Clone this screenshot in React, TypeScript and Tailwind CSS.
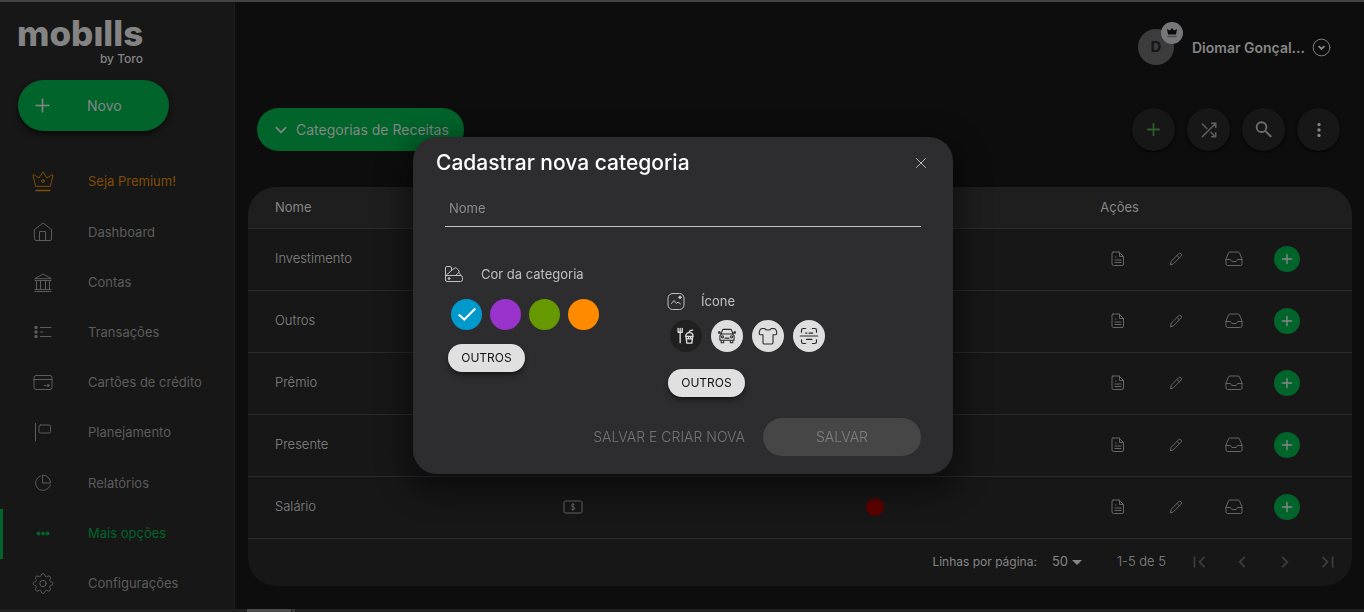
import React from "react";

type IconProps = { className?: string; children: React.ReactNode; box?: string; w?: number };

function Icon({ className = "", children, box = "0 0 24 24", w = 1 }: IconProps) {
  return (
    <svg
      viewBox={box}
      fill="none"
      stroke="currentColor"
      strokeWidth={w}
      strokeLinecap="round"
      strokeLinejoin="round"
      aria-hidden="true"
      className={"shrink-0 " + className}
    >
      {children}
    </svg>
  );
}

const menu = [
  {
    label: "Seja Premium!",
    tone: "text-[#804d05]",
    icon: (
      <>
        <path d="M4.500 16 2 5h1.500L8 8 12 2l4 6 4.500-3H22l-2.500 11Z" />
        <circle cx="12" cy="11" r="1.400" />
        <path d="M5 20.500h14" strokeWidth="1.400" />
      </>
    ),
  },
  {
    label: "Dashboard",
    tone: "text-[#5c5c5c]",
    icon: (
      <>
        <path d="M3.500 9.500 12 3l8.500 6.500V19a1.500 1.500 0 0 1-1.500 1.500H5A1.500 1.500 0 0 1 3.500 19Z" />
        <path d="M8.500 20.500v-9h6v9" />
      </>
    ),
  },
  {
    label: "Contas",
    tone: "text-[#5c5c5c]",
    icon: (
      <path d="M4 7.500 12 3l8 4.500ZM4 9.500h16M4 18.500h16M4 20.500h16M5.500 10v8.500M9.500 10v8.500M14.500 10v8.500M18.500 10v8.500" />
    ),
  },
  {
    label: "Transações",
    tone: "text-[#5c5c5c]",
    icon: (
      <>
        <path d="M9.500 6.500h10.500M9.500 11h2.500M9.500 15.500h10.500" />
        <g fill="currentColor" stroke="none">
          <circle cx="5" cy="6.500" r="1.700" />
          <circle cx="5" cy="11" r="1.700" />
          <circle cx="5" cy="15.500" r="1.700" />
        </g>
      </>
    ),
  },
  {
    label: "Cartões de crédito",
    tone: "text-[#5c5c5c]",
    icon: (
      <>
        <rect x="3" y="4.500" width="18" height="14" rx="2" />
        <path d="M3 8.500h18M13.500 14.500h1.500" />
        <circle cx="17.200" cy="14.500" r="1" fill="currentColor" />
      </>
    ),
  },
  {
    label: "Planejamento",
    tone: "text-[#5c5c5c]",
    icon: (
      <>
        <path d="M4.500 2.500V20" />
        <rect x="8" y="4" width="11.500" height="8" rx="1.500" />
      </>
    ),
  },
  {
    label: "Relatórios",
    tone: "text-[#5c5c5c]",
    icon: (
      <>
        <path d="M9.500 4.900A7.500 7.500 0 1 0 19.300 14" />
        <path d="M12 4a8 8 0 0 1 7.500 8H12Z" />
      </>
    ),
  },
  {
    label: "Mais opções",
    tone: "text-[#00642b]",
    active: true,
    icon: (
      <g fill="currentColor" stroke="none">
        <circle cx="7.500" cy="11.500" r="1.900" />
        <circle cx="12" cy="11.500" r="1.900" />
        <circle cx="16.500" cy="11.500" r="1.900" />
      </g>
    ),
  },
  {
    label: "Configurações",
    tone: "text-[#5c5c5c]",
    icon: (
      <>
        <path d="M10.300 2.800a1.800 1.800 0 0 1 3.400 0l.4 1.200c.2.700 1 1 1.700.7l1.200-.6a1.800 1.800 0 0 1 2.400 2.400l-.6 1.200c-.3.700 0 1.500.7 1.700l1.200.4a1.800 1.800 0 0 1 0 3.400l-1.200.4c-.7.200-1 1-.7 1.700l.6 1.200a1.800 1.800 0 0 1-2.400 2.400l-1.200-.6c-.7-.3-1.500 0-1.700.7l-.4 1.200a1.800 1.800 0 0 1-3.400 0l-.4-1.200c-.2-.7-1-1-1.700-.7l-1.200.6a1.800 1.800 0 0 1-2.400-2.400l.6-1.200c.3-.7 0-1.500-.7-1.700l-1.200-.4a1.800 1.800 0 0 1 0-3.400l1.200-.4c.7-.2 1-1 .7-1.700l-.6-1.200A1.800 1.800 0 0 1 7 4.100l1.200.6c.7.3 1.500 0 1.700-.7Z" />
        <circle cx="12" cy="11.500" r="3.200" />
      </>
    ),
  },
];

const rows = ["Investimento", "Outros", "Prêmio", "Presente", "Salário"];

function Sidebar() {
  return (
    <aside className="flex w-[235px] shrink-0 flex-col border-r border-[#1f1f1f] bg-[#171717]">
      <a href="#inicio" className="ml-[17px] mt-[13px] flex w-[126px] flex-col gap-[2px] text-[#848484]">
        <span className="text-[35px] font-extrabold leading-9">mobılls</span>
        <span className="text-right text-[12px] font-medium leading-3">by Toro</span>
      </a>
      <button
        type="button"
        className="mb-[26px] ml-[18px] mt-[15px] flex h-[51px] w-[151px] shrink-0 items-center rounded-full bg-[#00642b] pl-[15px] text-[14px] text-[#868686] shadow-md shadow-black/50"
      >
        <Icon className="size-[19px]" w={2}>
          <path d="M12 4v16M4 12h16" />
        </Icon>
        <span className="ml-[35px]">Novo</span>
      </button>
      <nav className="flex flex-1 flex-col">
        {menu.map((item) => (
          <a
            key={item.label}
            href="#menu"
            aria-current={item.active ? "page" : undefined}
            className={
              "flex min-h-12 flex-1 items-center border-l-[3px] pl-7 text-[13px] " +
              item.tone +
              (item.active ? " border-[#00642b]" : " border-transparent")
            }
          >
            <Icon className="size-6">{item.icon}</Icon>
            <span className="ml-[33px]">{item.label}</span>
          </a>
        ))}
      </nav>
    </aside>
  );
}

function RoundButton({ label, tone, children }: { label: string; tone: string; children: React.ReactNode }) {
  return (
    <button
      type="button"
      aria-label={label}
      className={"flex size-[43px] items-center justify-center rounded-full bg-[#171717] shadow-sm shadow-black/60 " + tone}
    >
      {children}
    </button>
  );
}

function Header() {
  return (
    <header className="flex items-center justify-end pr-[21px] pt-[27px]">
      <div className="relative flex size-9 items-center justify-center rounded-full bg-[#3c3c3c] text-[15px] font-bold text-[#161616]">
        D
        <span className="absolute -right-[9px] -top-[7px] flex size-[22px] items-center justify-center rounded-full bg-[#77777a]">
          <svg viewBox="0 0 12 12" className="size-3" aria-hidden="true">
            <path d="M2 7.500 1 2l3 1.500L6 1l2 2.500L11 2l-1 5.500Z" fill="#0a0a0a" />
            <path d="M1.500 9.500h9" stroke="#4c4c4e" strokeWidth="1.400" />
          </svg>
        </span>
      </div>
      <button type="button" className="ml-[18px] flex items-center gap-[7px] text-[#868686]">
        <span className="text-[14px] font-semibold">Diomar Gonçal...</span>
        <Icon className="size-[19px]" box="0 0 20 20">
          <circle cx="10" cy="10" r="8.800" />
          <path d="m7.500 9 2.500 2.500L12.500 9" strokeWidth="2" />
        </Icon>
      </button>
    </header>
  );
}

function Toolbar() {
  return (
    <div className="mt-[43px] flex items-center justify-between pl-[9px] pr-3">
      <button
        type="button"
        className="flex h-[43px] w-[207px] items-center gap-[7px] rounded-full bg-[#00642b] pl-4 text-[14px] text-[#868686]"
      >
        <Icon className="size-4" w={2.500}>
          <path d="m5 8.500 7 7 7-7" />
        </Icon>
        <span className="whitespace-nowrap">Categorias de Receitas</span>
      </button>
      <div className="flex gap-3">
        <RoundButton label="Adicionar" tone="text-[#2c5c2f]">
          <Icon className="size-[17px]" w={2.500}>
            <path d="M12 4v16M4 12h16" />
          </Icon>
        </RoundButton>
        <RoundButton label="Alternar" tone="text-[#606060]">
          <Icon className="size-[18px]" w={2}>
            <path d="m3 21 18-18M15.500 3H21v5.500M3 4l6 6M14.500 15l6 6M21 15.500V21h-5.500" />
          </Icon>
        </RoundButton>
        <RoundButton label="Buscar" tone="text-[#6e6e6e]">
          <Icon className="size-[19px]" w={2.400}>
            <circle cx="9.500" cy="9" r="6.200" />
            <path d="m14.500 14 6.500 6.500" />
          </Icon>
        </RoundButton>
        <RoundButton label="Mais" tone="text-[#868686]">
          <svg viewBox="0 0 24 24" fill="currentColor" className="size-5" aria-hidden="true">
            <circle cx="12" cy="5.500" r="2" />
            <circle cx="12" cy="12" r="2" />
            <circle cx="12" cy="18.500" r="2" />
          </svg>
        </RoundButton>
      </div>
    </div>
  );
}

function RowActions({ name }: { name: string }) {
  const cell = "flex h-8 w-9 items-center justify-center text-[#666666]";
  return (
    <div className="flex items-center gap-[22px]">
      <button type="button" aria-label={"Detalhes de " + name} className={cell}>
        <Icon className="size-4" box="0 0 16 16">
          <path d="M3 1h6l4.500 4.500V13a1.500 1.500 0 0 1-1.500 1.500H3.500A1.500 1.500 0 0 1 2 13V2A1 1 0 0 1 3 1ZM9.500 1v4.500h4M5.500 6h.5M5 9h6M5 11.500h6" />
        </Icon>
      </button>
      <button type="button" aria-label={"Editar " + name} className={cell}>
        <Icon className="size-4" box="0 0 16 16">
          <path d="m2.500 13.500.8-3.300 7.200-7.400a1.700 1.700 0 0 1 2.500 2.400L5.600 12.600ZM9 4.500l2.400 2.400" />
        </Icon>
      </button>
      <button type="button" aria-label={"Arquivar " + name} className={cell}>
        <Icon className="size-[18px]" box="0 0 18 18">
          <path d="M1 9 3.500 3A1.500 1.500 0 0 1 5 2h8a1.500 1.500 0 0 1 1.500 1L17 9v5a1.500 1.500 0 0 1-1.500 1.500h-13A1.500 1.500 0 0 1 1 14ZM1 9.500h4.500c.5 0 .7 2 1.500 2h4c.8 0 1-2 1.500-2H17" />
        </Icon>
      </button>
      <button
        type="button"
        aria-label={"Adicionar em " + name}
        className="flex size-[26px] items-center justify-center rounded-full bg-[#00642b] text-[#868686]"
      >
        <Icon className="size-[14px]" w={2.400}>
          <path d="M12 4v16M4 12h16" />
        </Icon>
      </button>
    </div>
  );
}

function PageButton({ label, d }: { label: string; d: string }) {
  return (
    <button type="button" disabled aria-label={label} className="flex h-8 w-[43px] items-center justify-center text-[#3c3c3c]">
      <svg viewBox="0 0 24 24" fill="none" stroke="currentColor" strokeWidth="2" className="size-[22px]" aria-hidden="true">
        <path d={d} />
      </svg>
    </button>
  );
}

function CategoryTable() {
  return (
    <section className="mt-9 overflow-hidden rounded-[28px] bg-[#171717] text-[#868686]">
      <table className="w-full table-fixed border-collapse text-left text-[13px]">
        <colgroup>
          <col className="w-[28.5%]" />
          <col className="w-[27.5%]" />
          <col className="w-[21.2%]" />
          <col />
        </colgroup>
        <thead>
          <tr className="h-[41px] border-b border-[#2a2a2a] bg-[#1e1e1e]">
            <th className="pl-[27px] font-normal">Nome</th>
            <th className="font-normal">Ícone</th>
            <th className="font-normal">Cor</th>
            <th className="font-normal">Ações</th>
          </tr>
        </thead>
        <tbody className="font-light">
          {rows.map((name) => (
            <tr key={name} className="h-[62px] border-b border-[#2a2a2a]">
              <td className="pl-[27px]">{name}</td>
              <td>
                <svg viewBox="0 0 20 14" className="h-[14px] w-5 text-[#666666]" fill="none" stroke="currentColor" aria-hidden="true">
                  <rect x="1" y="1" width="18" height="12" rx="1.500" />
                  <path d="M11.800 5.200c-.3-.7-1-1-1.800-1-1 0-1.700.5-1.700 1.300 0 1.800 3.500.9 3.500 2.800 0 .9-.8 1.400-1.800 1.400-.9 0-1.600-.4-1.900-1.100M10 3v8" />
                </svg>
              </td>
              <td>
                <span className="block size-[18px] rounded-full bg-[#5e0000]" />
              </td>
              <td>
                <RowActions name={name} />
              </td>
            </tr>
          ))}
        </tbody>
      </table>
      <footer className="flex h-[47px] items-center justify-end pr-[3px] text-[12px]">
        <label htmlFor="linhas">Linhas por página:</label>
        <span className="relative ml-[15px] mr-[35px] flex items-center">
          <select id="linhas" defaultValue="50" className="w-[30px] appearance-none bg-transparent text-[13px] outline-none">
            <option>50</option>
          </select>
          <svg viewBox="0 0 10 5" fill="currentColor" className="pointer-events-none absolute right-0 h-[5px] w-[10px]" aria-hidden="true">
            <path d="M0 0h10L5 5Z" />
          </svg>
        </span>
        <span className="mr-[11px] text-[13px] font-light">1-5 de 5</span>
        <PageButton label="Primeira página" d="M18 6.500 12.500 12l5.500 5.500M7 6v12" />
        <PageButton label="Página anterior" d="M15 6.500 9.500 12l5.500 5.500" />
        <PageButton label="Próxima página" d="m9 6.500 5.500 5.500L9 17.500" />
        <PageButton label="Última página" d="m6 6.500 5.500 5.500L6 17.500M17 6v12" />
      </footer>
    </section>
  );
}

const colors = [
  { name: "Azul", bg: "bg-[#0099cc]" },
  { name: "Roxo", bg: "bg-[#9933cc]" },
  { name: "Verde", bg: "bg-[#669900]" },
  { name: "Laranja", bg: "bg-[#ff8a00]" },
];

const glyphs = [
  {
    name: "Alimentação",
    art: (
      <>
        <path d="M2.500 3v4.500h5V3M5 3v17" strokeWidth="1.600" />
        <path d="M12 12.500h8L19 20.500h-6ZM11.500 12.500c.5-3 2-4.500 4.500-4.500s4.500 1.500 4.500 4.500M15.500 8l1.500-2.500 3-.5M12.500 15.500h7M15 12.500v3M17.500 12.500v3" strokeWidth="1.600" />
      </>
    ),
  },
  {
    name: "Carro",
    art: (
      <>
        <path d="m5 9.500 1.500-4.500A1.500 1.500 0 0 1 8 4h8a1.500 1.500 0 0 1 1.500 1L19 9.500M3.500 17v-5.500l2-2h13l2 2V17ZM5 17v3h3v-3M16 17v3h3v-3M9.500 14.500h5M3.500 7H2v1.500h3M20.500 7H22v1.500h-3" />
        <circle cx="6.500" cy="13" r="1.300" />
        <circle cx="17.500" cy="13" r="1.300" />
      </>
    ),
  },
  {
    name: "Vestuário",
    art: (
      <path d="M8 3c1 2.500 7 2.500 8 0h3c2.500.5 3.500 2.500 3.500 6 0 1-.5 1.500-1.500 1.500h-3v9.500a1.500 1.500 0 0 1-1.500 1.500h-9A1.500 1.500 0 0 1 6 20v-9.500H3c-1 0-1.500-.5-1.500-1.500 0-3.500 1-5.500 3.500-6Z" />
    ),
  },
  {
    name: "Código",
    art: (
      <path d="M3 7.500V5a2 2 0 0 1 2-2h3M16 3h3a2 2 0 0 1 2 2v2.500M21 16.500V19a2 2 0 0 1-2 2h-3M8 21H5a2 2 0 0 1-2-2v-2.500M1.500 12h21M8 8.500h1.500M12 8.500h4.500M9 16h6.500" strokeWidth="1.400" />
    ),
  },
];

function OthersButton({ label }: { label: string }) {
  return (
    <button
      type="button"
      aria-label={label}
      className="flex h-7 w-[77px] items-center justify-center rounded-full bg-[#e0e0e0] text-[12px] text-[#111111] shadow-md shadow-black/40"
    >
      OUTROS
    </button>
  );
}

function CategoryDialog() {
  return (
    <div className="fixed inset-0 flex items-center justify-center pb-0.5 pl-0.5">
      <div
        role="dialog"
        aria-modal="true"
        aria-labelledby="titulo"
        className="w-[540px] max-w-full rounded-[24px] bg-[#2d2d2f] pb-[18px] shadow-[0_11px_30px_8px_rgba(0,0,0,0.45)]"
      >
        <div className="flex items-center justify-between pl-[23px] pr-[25px] pt-3">
          <h2 id="titulo" className="text-[21px] font-medium leading-7 text-white">
            Cadastrar nova categoria
          </h2>
          <button type="button" aria-label="Fechar" className="flex size-[14px] items-center justify-center text-[#b4b4b5]">
            <Icon className="size-[14px]" box="0 0 14 14">
              <path d="m2.500 2.500 9 9M11.500 2.500l-9 9" />
            </Icon>
          </button>
        </div>
        <form className="px-8" onSubmit={(e) => e.preventDefault()}>
          <input
            type="text"
            aria-label="Nome"
            placeholder="Nome"
            className="mt-[14px] block h-9 w-full border-b border-[#c4c4c4] bg-transparent px-1 text-[13px] text-white outline-none placeholder:text-[#8b8b8d]"
          />
          <div className="mt-9 flex">
            <fieldset className="w-[222px]">
              <legend className="flex h-6 items-center gap-[18px] text-[13px] text-[#c0c0c1]">
                <Icon className="size-[18px]" box="0 0 18 18">
                  <path d="M.5 14.500V2A1.500 1.500 0 0 1 2 .5h3A1.500 1.500 0 0 1 6.500 2v2.500L1.500 9M6.500 4.500l2.500-2a2 2 0 0 1 2.800 0L13.500 4a2 2 0 0 1 0 2.800L10.500 9.500M14 6.500a3 3 0 0 1 1.500 3M.5 9.500h15A2 2 0 0 1 17.500 11.500v2a2 2 0 0 1-2 2H2A1.500 1.500 0 0 1 .5 14Z" />
                  <circle cx="4" cy="12.500" r=".9" fill="currentColor" />
                </Icon>
                Cor da categoria
              </legend>
              <div className="ml-[6px] mt-3 flex gap-2">
                {colors.map((c, i) => (
                  <button
                    key={c.name}
                    type="button"
                    aria-label={c.name}
                    aria-pressed={i === 0}
                    className={"flex size-[31px] items-center justify-center rounded-full text-white " + c.bg}
                  >
                    {i === 0 && (
                      <Icon className="size-[22px]" w={2.300}>
                        <path d="m3 12.500 6 5.500L21 6" strokeLinecap="butt" strokeLinejoin="miter" />
                      </Icon>
                    )}
                  </button>
                ))}
              </div>
              <div className="ml-[3px] mt-[14px]">
                <OthersButton label="Outras cores" />
              </div>
            </fieldset>
            <fieldset className="mt-[27px]">
              <legend className="flex h-6 items-center gap-4 text-[13px] text-[#c0c0c1]">
                <Icon className="size-[18px]" box="0 0 18 18">
                  <rect x="1" y=".5" width="16" height="16" rx="4.500" />
                  <path d="m4.500 10.500 2.500-3 2.500 3 1.500-1.500 2.500 2" />
                  <circle cx="13" cy="4.300" r="1.200" fill="currentColor" />
                </Icon>
                Ícone
              </legend>
              <div className="ml-[3px] mt-1.5 flex gap-[9px]">
                {glyphs.map((g, i) => (
                  <button
                    key={g.name}
                    type="button"
                    aria-label={g.name}
                    aria-pressed={i === 0}
                    className={
                      "flex size-8 items-center justify-center rounded-full " +
                      (i === 0 ? "bg-[#202020] text-[#dedede]" : "bg-[#dedede] text-[#2a2a2a]")
                    }
                  >
                    <Icon className="size-5" w={1.300}>
                      {g.art}
                    </Icon>
                  </button>
                ))}
              </div>
              <div className="ml-px mt-[17px]">
                <OthersButton label="Outros ícones" />
              </div>
            </fieldset>
          </div>
          <div className="mt-[21px] flex items-center justify-end gap-[18px] text-[14px] font-light">
            <button type="button" disabled className="text-[#747475]">
              SALVAR E CRIAR NOVA
            </button>
            <button type="submit" disabled className="h-[38px] w-[158px] rounded-full bg-[#464646] text-[#808080]">
              SALVAR
            </button>
          </div>
        </form>
      </div>
    </div>
  );
}

export default function App() {
  return (
    <div className="flex min-h-screen flex-col bg-[#0d0d0d] font-['Inter',sans-serif]">
      <div className="h-[2px] bg-[#434343]" />
      <div className="flex flex-1">
        <Sidebar />
        <main className="min-w-0 flex-1 pl-[13px] pr-3">
          <Header />
          <Toolbar />
          <CategoryTable />
        </main>
      </div>
      <div className="flex h-[3px] bg-[#222222]">
        <div className="ml-[247px] w-11 bg-[#4c4c4c]" />
        <div className="ml-px w-[3px] bg-[#3a3a3a]" />
      </div>
      <CategoryDialog />
    </div>
  );
}
